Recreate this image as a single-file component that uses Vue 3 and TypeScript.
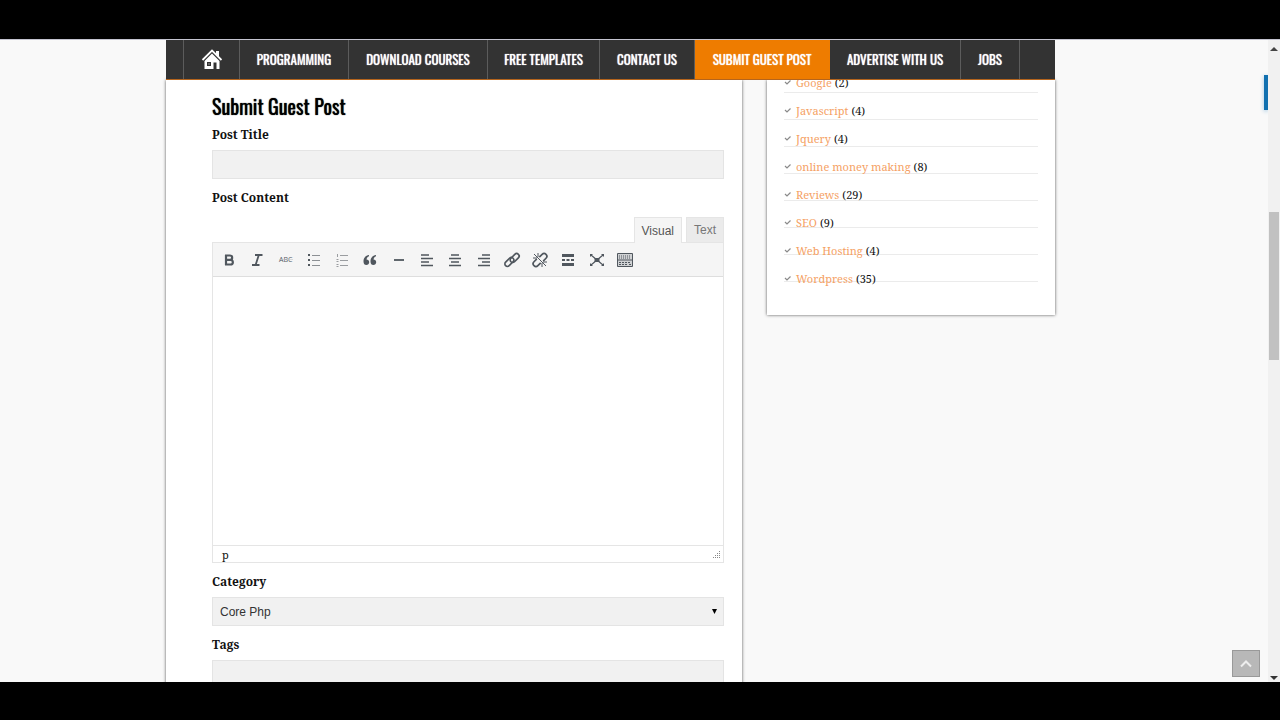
<script setup lang="ts">
import { ref } from 'vue'

interface Category {
  name: string
  count: number
}

const menu: string[] = [
  'PROGRAMMING',
  'DOWNLOAD COURSES',
  'FREE TEMPLATES',
  'CONTACT US',
  'SUBMIT GUEST POST',
  'ADVERTISE WITH US',
  'JOBS',
]
const current = 'SUBMIT GUEST POST'

const categories: Category[] = [
  { name: 'Google', count: 2 },
  { name: 'Javascript', count: 4 },
  { name: 'Jquery', count: 4 },
  { name: 'online money making', count: 8 },
  { name: 'Reviews', count: 29 },
  { name: 'SEO', count: 9 },
  { name: 'Web Hosting', count: 4 },
  { name: 'Wordpress', count: 35 },
]

const tools: string[] = [
  'Bold', 'Italic', 'Strikethrough', 'Bulleted list', 'Numbered list', 'Blockquote',
  'Horizontal line', 'Align left', 'Align center', 'Align right', 'Insert link',
  'Remove link', 'Read more', 'Fullscreen', 'Toolbar toggle',
]

const title = ref('')
const content = ref('')
const category = ref('Core Php')
const tags = ref('')
</script>

<template>
  <div class="screen">
    <div class="viewport">
      <div class="page">
        <nav class="menu">
          <a href="#" class="item home" aria-label="Home">
            <svg width="22" height="22" viewBox="0 0 22 22">
              <path d="M15 3h3v6l-3-3z" fill="#fff" />
              <path d="M1.500 12L11 2.500L20.500 12" fill="none" stroke="#fff" stroke-width="1.800" />
              <path d="M11 5.500L18.500 13V21H15.500V14.500H12.500V21H3.500V13Z" fill="#fff" />
              <path d="M6 14h4v4H6z" fill="#333" />
              <path d="M7 15h2v2H7z" fill="#666" />
            </svg>
          </a>
          <a
            v-for="entry in menu"
            :key="entry"
            href="#"
            class="item"
            :class="{ active: entry === current }"
          >{{ entry }}</a>
        </nav>

        <div class="columns">
          <main class="panel post">
            <h1>Submit Guest Post</h1>
            <form @submit.prevent>
              <label for="title">Post Title</label>
              <input id="title" v-model="title" type="text" class="field" />

              <label for="content">Post Content</label>
              <div class="tabs">
                <button type="button" class="tab selected">Visual</button>
                <button type="button" class="tab">Text</button>
              </div>
              <div class="editor">
                <div class="toolbar">
                  <button v-for="(tool, i) in tools" :key="tool" type="button" class="tool" :aria-label="tool">
                    <svg width="20" height="20" viewBox="0 0 20 20" fill="none" stroke="#50575e" stroke-width="2">
                      <path v-if="i === 0" d="M7 5v10M6 5.500h5a2.100 2.100 0 0 1 0 4.300H7h4.500a2.300 2.300 0 0 1 0 4.700H6" stroke-width="2.200" />
                      <path v-else-if="i === 1" d="M8 5h7.500M5 15h7.500M11.800 5l-3.200 10" stroke-width="1.800" />
                      <g v-else-if="i === 2">
                        <text x="3" y="12" class="abc">ABC</text>
                        <path d="M3 9.500h14" stroke="#c0c3c6" stroke-width="1" stroke-opacity="0.600" />
                      </g>
                      <g v-else-if="i === 3">
                        <path d="M4 5h2M4 10h2M4 15h2" />
                        <path d="M8 5.500h8M8 10.500h8M8 15.500h8" stroke="#8c9094" stroke-width="1" />
                      </g>
                      <g v-else-if="i === 4" stroke="#9a9da0" stroke-width="1">
                        <path d="M8 5.500h8M8 10.500h8M8 15.500h8M5.500 4v3M4.500 9.500h2M4.500 11.500h2M4.500 14.500h2M4.500 16.500h2" />
                      </g>
                      <g v-else-if="i === 5" fill="#50575e" stroke="none">
                        <path d="M9 5C5.500 5.500 3.500 8 3.500 11.500C3.500 14 4.700 15 6.300 15C8 15 9.200 13.800 9.200 12.200C9.200 10.500 8 9.500 6.500 9.500C6.700 8 7.500 7 9 6.300Z" />
                        <path d="M16 5C12.500 5.500 10.500 8 10.500 11.500C10.500 14 11.700 15 13.300 15C15 15 16.200 13.800 16.200 12.200C16.200 10.500 15 9.500 13.500 9.500C13.700 8 14.500 7 16 6.300Z" />
                      </g>
                      <path v-else-if="i === 6" d="M5 10h10" stroke-width="1.800" />
                      <path v-else-if="i === 7" d="M4 5h8M4 8.500h12M4 12h8M4 15.500h12" stroke-width="1.500" />
                      <path v-else-if="i === 8" d="M6 5h8M4 8.500h12M6 12h8M4 15.500h12" stroke-width="1.500" />
                      <path v-else-if="i === 9" d="M8 5h8M4 8.500h12M8 12h8M4 15.500h12" stroke-width="1.500" />
                      <g v-else-if="i === 10" transform="rotate(-45 10 10)">
                        <rect x="1.500" y="7" width="10.500" height="5" rx="2.500" stroke-width="1.700" />
                        <rect x="8" y="8" width="10.500" height="5" rx="2.500" stroke-width="1.700" />
                      </g>
                      <g v-else-if="i === 11" stroke-width="1.700">
                        <g transform="rotate(-45 10 10)">
                          <path d="M8.500 7H4.500a2.700 2.700 0 0 0 0 5.500h4M11.500 7.500h4a2.700 2.700 0 0 1 0 5.500h-4" />
                        </g>
                        <path d="M4 4l12 12M8 3v4M3 8h4M12 17v-4M17 12h-4" stroke-width="1" />
                      </g>
                      <g v-else-if="i === 12">
                        <path d="M4 5.500h12M4 14.500h12" stroke-width="3" />
                        <path d="M4 10h3M8.500 10h3M13 10h3" />
                      </g>
                      <g v-else-if="i === 13">
                        <path d="M4 5l12 10M16 5L4 15" stroke-width="1.200" />
                        <path d="M7.500 8h5v4h-5z" fill="#50575e" stroke="none" />
                        <path d="M3 4h3l-3 3zM17 4h-3l3 3zM3 16h3l-3-3zM17 16h-3l3-3z" fill="#50575e" stroke="none" />
                      </g>
                      <g v-else stroke-width="1">
                        <path d="M2.500 3.500h15v13h-15z" fill="#cfd1d3" />
                        <path d="M4 6h12M4 8h12" stroke-dasharray="1 1" />
                        <path d="M3 10h14" />
                        <path d="M4 12.500h12M4 14.500h2M7 14.500h6M14 14.500h2" stroke-dasharray="2 1" />
                      </g>
                    </svg>
                  </button>
                </div>
                <textarea id="content" v-model="content"></textarea>
                <div class="status">
                  <span>p</span>
                  <svg width="9" height="9" viewBox="0 0 9 9" fill="#888">
                    <path d="M7 1h1v1H7zM5 3h1v1H5zM7 3h1v1H7zM3 5h1v1H3zM5 5h1v1H5zM7 5h1v1H7zM1 7h1v1H1zM3 7h1v1H3zM5 7h1v1H5zM7 7h1v1H7z" />
                  </svg>
                </div>
              </div>

              <label for="category">Category</label>
              <div class="picker">
                <select id="category" v-model="category" class="field">
                  <option>Core Php</option>
                </select>
                <svg class="caret" width="5" height="5" viewBox="0 0 5 5"><path d="M0 0h5L2.500 5z" /></svg>
              </div>

              <label for="tags">Tags</label>
              <input id="tags" v-model="tags" type="text" class="field" />
            </form>
          </main>

          <aside class="panel side">
            <ul>
              <li v-for="entry in categories" :key="entry.name">
                <svg width="7" height="7" viewBox="0 0 7 7">
                  <path d="M1 3L3 5L6.500 1.500" fill="none" stroke="#8a8a8a" stroke-width="1.200" />
                </svg>
                <a href="#">{{ entry.name }}</a>
                <span>({{ entry.count }})</span>
              </li>
            </ul>
          </aside>
        </div>
      </div>

      <div class="drawer"></div>
      <button type="button" class="to-top" aria-label="Back to top">
        <svg width="12" height="8" viewBox="0 0 12 8"><path d="M1 6.500L6 1.500L11 6.500" fill="none" stroke="#eee" stroke-width="2" /></svg>
      </button>
      <div class="scrollbar">
        <svg width="8" height="4" viewBox="0 0 8 4"><path d="M0 4L4 0L8 4z" fill="#444" /></svg>
        <div class="thumb"></div>
        <svg width="8" height="4" viewBox="0 0 8 4"><path d="M0 0L4 4L8 0z" fill="#333" /></svg>
      </div>
    </div>
  </div>
</template>

<style>
body {
  background: #000;
}
</style>

<style scoped>
* {
  box-sizing: border-box;
}

.screen {
  height: 100vh;
  padding: 39px 0 38px;
  background: #000;
  color: #111;
  font-family: "Noto Serif", "DejaVu Serif Condensed", "DejaVu Serif", serif;
  font-size: 12px;
}

.viewport {
  position: relative;
  height: 100%;
  overflow: hidden;
  background: #f9f9f9;
  border-top: 1px solid #c4c4d0;
}

.page {
  display: flex;
  flex-direction: column;
  height: 100%;
  margin: 0 225px 0 166px;
}

.menu {
  position: relative;
  z-index: 1;
  display: flex;
  flex: none;
  height: 40px;
  padding-left: 17px;
  background: #333;
  border-bottom: 1px solid #b5651d;
}

.item {
  display: flex;
  align-items: center;
  justify-content: center;
  flex: none;
  padding-bottom: 1px;
  border-right: 1px solid #5c5c5c;
  color: #fff;
  font-family: Oswald, "Liberation Sans Narrow", sans-serif;
  font-size: 13px;
  font-weight: 450;
  text-decoration: none;
  text-shadow: 0 0 1px #fff;
  white-space: nowrap;
}

.home {
  width: 57px;
  border-left: 1px solid #5c5c5c;
}

.item:nth-child(2) { width: 109px; }
.item:nth-child(3) { width: 139px; }
.item:nth-child(4) { width: 112px; }
.item:nth-child(5) { width: 95px; }
.item:nth-child(6) { width: 135px; }
.item:nth-child(7) { width: 131px; }
.item:nth-child(8) { width: 59px; }

.active {
  background: #ee7c00;
  border-color: #ee7c00;
}

.columns {
  display: grid;
  grid-template-columns: 2fr 1fr;
  flex: 1;
  min-height: 0;
  gap: 25px;
  align-items: start;
}

.panel {
  background: #fff;
  box-shadow: 0 0 3px #555;
}

.post {
  padding: 10px 18px 0 46px;
}

.side {
  padding: 0 17px 31px;
}

h1 {
  margin: 0;
  font-family: Oswald, "Liberation Sans Narrow", sans-serif;
  font-size: 20px;
  font-weight: 400;
  line-height: 32px;
  color: #000;
  text-shadow: 0 0 1px #000;
}

label {
  display: block;
  font-weight: 700;
  line-height: 26px;
}

.field {
  display: block;
  width: 100%;
  height: 29px;
  margin: 2px 0 6px;
  padding: 0 7px;
  appearance: none;
  background: #f1f1f1;
  border: 1px solid #e4e4e4;
  border-radius: 0;
  color: #333;
  font-family: "Liberation Sans", Arial, sans-serif;
  font-size: 12px;
}

.tabs {
  display: flex;
  gap: 4px;
  justify-content: flex-end;
  margin-top: 6px;
}

.tab {
  height: 25px;
  padding: 0 7px;
  background: #ebebeb;
  border: 1px solid #e5e5e5;
  border-bottom: 0;
  color: #777;
  font-family: "Liberation Sans", Arial, sans-serif;
  font-size: 12px;
}

.selected {
  position: relative;
  height: 26px;
  margin-bottom: -1px;
  background: #f5f5f5;
  color: #555;
}

.editor {
  margin-bottom: 6px;
  border: 1px solid #e5e5e5;
}

.toolbar {
  display: flex;
  justify-content: space-between;
  height: 34px;
  padding: 7px 88px 6px 6px;
  background: #f5f5f5;
  border-bottom: 1px solid #dedede;
}

.tool {
  width: 20px;
  height: 20px;
  padding: 0;
  background: none;
  border: 0;
}

.tool svg {
  display: block;
}

.abc {
  fill: #50575e;
  stroke: none;
  font-family: "Open Sans", sans-serif;
  font-size: 7px;
}

textarea {
  display: block;
  width: 100%;
  height: 268px;
  padding: 8px;
  border: 0;
  resize: none;
}

.status {
  display: flex;
  align-items: center;
  justify-content: space-between;
  height: 17px;
  padding: 0 2px 0 9px;
  border-top: 1px solid #e5e5e5;
  font-size: 11px;
}

.picker {
  position: relative;
}

.caret {
  position: absolute;
  top: 12px;
  right: 7px;
}

ul {
  display: flex;
  flex-direction: column;
  height: 204px;
  margin: 0;
  padding: 0;
  list-style: none;
  background: repeating-linear-gradient(#fff 0 12px, #ebebeb 12px 13px, #fff 13px 27px);
}

li {
  display: flex;
  flex: none;
  gap: 3px;
  align-items: center;
  height: 28px;
  font-size: 11px;
}

li:first-child {
  margin-top: -12px;
}

li a {
  margin-left: 2px;
  color: #f5a164;
  text-decoration: none;
}

.drawer {
  position: absolute;
  top: 35px;
  right: 12px;
  width: 4px;
  height: 35px;
  background: #1070b0;
  box-shadow: 0 1px 4px #9cc4e0;
}

.to-top {
  position: absolute;
  right: 20px;
  bottom: 5px;
  display: flex;
  align-items: center;
  justify-content: center;
  width: 28px;
  height: 27px;
  padding: 0;
  background: #b8b8b8;
  border: 1px solid #999;
}

.scrollbar {
  position: absolute;
  top: 0;
  right: 0;
  bottom: 0;
  display: flex;
  flex-direction: column;
  align-items: center;
  width: 12px;
  padding: 7px 0 2px;
  background: #f1f1f1;
}

.thumb {
  width: 10px;
  height: 148px;
  margin: 161px 0 auto;
  background: #c1c1c1;
}
</style>
